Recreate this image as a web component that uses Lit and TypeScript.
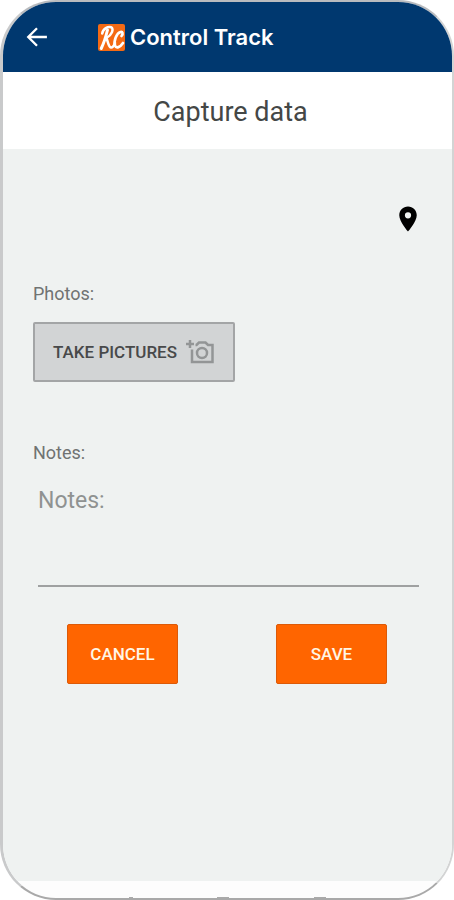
import { LitElement, html, css } from "lit";
import { customElement } from "lit/decorators.js";

@customElement("app-root")
export class AppRoot extends LitElement {
  static styles = css`
    :host {
      display: block;
      background: #ffffff;
      font-family: Roboto, "Liberation Sans", sans-serif;
      color: #444746;
    }
    * {
      box-sizing: border-box;
    }
    .device {
      display: flex;
      flex-direction: column;
      min-height: 100vh;
      border: 2px solid #b9bbbe;
      border-left-width: 3px;
      border-left-color: #c9cacb;
      border-right-color: #d3d4d4;
      border-bottom-color: #a9a9a9;
      border-radius: 56px;
      overflow: hidden;
      background: #fdfdfd;
    }
    .bar {
      display: flex;
      align-items: center;
      height: 70px;
      padding-left: 20px;
      background: #00386f;
      color: #ffffff;
    }
    .back {
      display: flex;
      width: 28px;
      height: 28px;
      padding: 0;
      border: 0;
      background: none;
      color: inherit;
    }
    .logo {
      width: 27px;
      height: 27px;
      margin-left: 47px;
    }
    .name {
      margin-left: 5px;
      font: 600 22px/28px Inter, Roboto, sans-serif;
    }
    .title {
      margin: 0;
      padding: 3px 0 0 6px;
      background: #ffffff;
      font-size: 27px;
      line-height: 74px;
      font-weight: 400;
      text-align: center;
    }
    .form {
      flex: 1;
      display: flex;
      flex-direction: column;
      align-items: flex-start;
      padding: 55px 33px 0 30px;
      background: #eff2f1;
    }
    .pin {
      display: flex;
      align-self: flex-end;
      margin-right: -4px;
      padding: 0;
      border: 0;
      background: none;
      color: #000000;
    }
    .label {
      margin-top: 48px;
      font-size: 18px;
      line-height: 24px;
      color: #707372;
    }
    .take {
      display: flex;
      align-items: center;
      gap: 8px;
      height: 60px;
      margin-top: 16px;
      padding: 0 18px;
      border: 2px solid #a3a5a6;
      border-radius: 2px;
      background: #d2d4d5;
      color: #48494a;
      font: 500 17px/24px Roboto, sans-serif;
    }
    .take svg {
      color: #939596;
    }
    .label.notes {
      margin-top: 59px;
    }
    .text {
      align-self: stretch;
      height: 104px;
      margin: 18px 0 0 5px;
      padding: 4px 0;
      border: 0;
      border-bottom: 2px solid #9fa1a1;
      background: none;
      resize: none;
      outline: none;
      font: 400 23px/28px Roboto, sans-serif;
      color: #444746;
    }
    .text::placeholder {
      color: #8f9291;
      opacity: 1;
    }
    .actions {
      align-self: stretch;
      display: flex;
      justify-content: space-between;
      margin-top: 37px;
      padding: 0 32px 0 34px;
    }
    .action {
      width: 111px;
      height: 60px;
      padding: 0;
      border: 1px solid #dc5a08;
      border-radius: 2px;
      background: #ff6500;
      color: #fff6e6;
      font: 500 17px/24px Roboto, sans-serif;
    }
    .foot {
      display: flex;
      align-items: flex-end;
      justify-content: space-around;
      height: 17px;
      padding: 0 84px;
    }
    .nub {
      width: 12px;
      height: 1px;
      background: #aaaaaa;
    }
    .nub:first-child {
      width: 4px;
    }
  `;

  render() {
    return html`
      <div class="device">
        <header class="bar">
          <button class="back" aria-label="Back">
            <svg width="28" height="28" viewBox="0 0 24 24" fill="none" stroke="currentColor" stroke-width="2">
              <path d="M20.500 12H4.500M12 4.500L4.500 12l7.500 7.500" />
            </svg>
          </button>
          <svg class="logo" viewBox="0 0 27 27" aria-hidden="true">
            <rect width="27" height="27" rx="2" fill="#f46a14" />
            <g fill="none" stroke="#ffffff" stroke-linecap="round" stroke-linejoin="round">
              <path stroke-width="3" d="M9.500 6C8 12 6 19 3.200 24.500" />
              <path stroke-width="2.500" d="M4.200 9.500C5 4.500 10 2.200 13 3.200C16.500 4.600 13.500 11.500 8.500 13.800C10 18 10.500 23 13 23.500C15 23.700 16 21.500 17 19" />
              <path stroke-width="2.700" d="M23.500 12C25.500 9.500 24.500 7.500 22.500 8C18.500 9.200 15.500 17 17 21.500C18.200 24.700 22 23.500 25 19" />
            </g>
          </svg>
          <span class="name">Control Track</span>
        </header>
        <h1 class="title">Capture data</h1>
        <form class="form" @submit=${(e: Event) => e.preventDefault()}>
          <button class="pin" type="button" aria-label="Location">
            <svg width="30" height="30" viewBox="0 0 24 24" fill="currentColor">
              <path d="M12 2C8.130 2 5 5.130 5 9c0 5.250 7 13 7 13s7-7.750 7-13c0-3.870-3.130-7-7-7zm0 9.500a2.500 2.500 0 1 1 0-5 2.500 2.500 0 0 1 0 5z" />
            </svg>
          </button>
          <label class="label" for="take">Photos:</label>
          <button class="take" id="take" type="button">
            TAKE PICTURES
            <svg width="30" height="29" viewBox="0 0 29 29" fill="none" stroke="currentColor" stroke-width="2.500" aria-hidden="true">
              <path d="M4.500 2v8M0.500 6h8" />
              <path d="M6.500 11.500V24H27V7H22.500L20 4.500H13.500L11 7H10" />
              <circle cx="16.500" cy="15" r="5" />
            </svg>
          </button>
          <label class="label notes" for="notes">Notes:</label>
          <textarea class="text" id="notes" placeholder="Notes:"></textarea>
          <div class="actions">
            <button class="action" type="button">CANCEL</button>
            <button class="action" type="submit">SAVE</button>
          </div>
        </form>
        <footer class="foot">
          <span class="nub"></span>
          <span class="nub"></span>
          <span class="nub"></span>
        </footer>
      </div>
    `;
  }
}
